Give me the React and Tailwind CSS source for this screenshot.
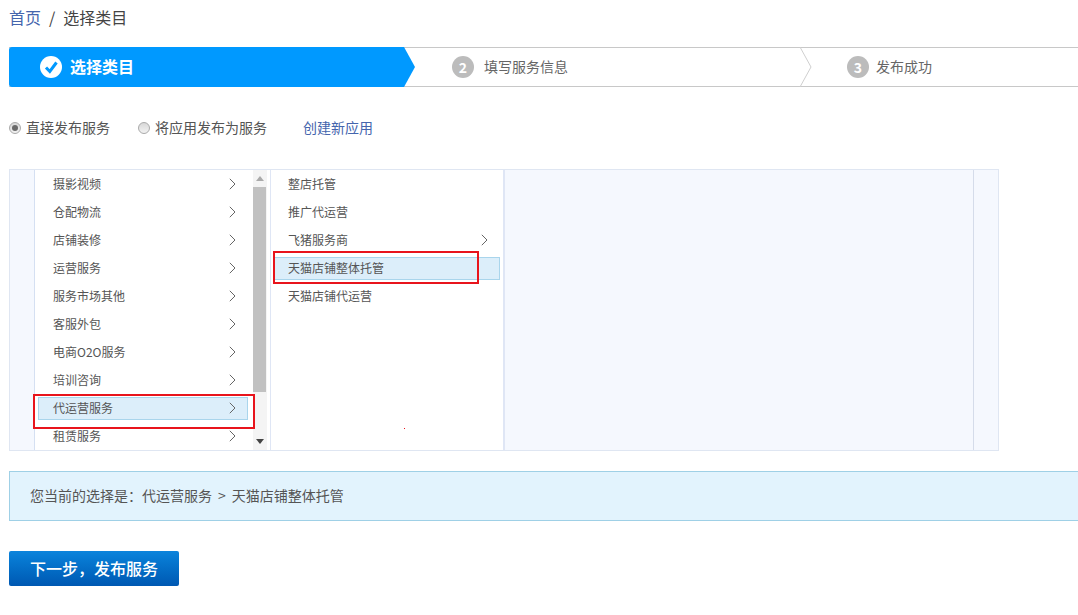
import React from 'react';

const font = { fontFamily: '"Microsoft YaHei", "Noto Sans CJK SC", sans-serif' };

const leftItems = ['摄影视频', '仓配物流', '店铺装修', '运营服务', '服务市场其他', '客服外包', '电商O2O服务', '培训咨询', '代运营服务', '租赁服务'];
const midItems = [
  { name: '整店托管' },
  { name: '推广代运营' },
  { name: '飞猪服务商', more: true },
  { name: '天猫店铺整体托管', active: true },
  { name: '天猫店铺代运营' },
];

const Chevron = () => (
  <svg width="7" height="12" viewBox="0 0 7 12" fill="none" className="mb-px shrink-0">
    <path d="M0.8 0.8 L6 6 L0.8 11.2" stroke="#666" strokeWidth="1" />
  </svg>
);

const Row = ({ name, more, active, rowPad, chevronPad }) => (
  <div className={`h-[28px] py-[3px] ${rowPad}`}>
    <div className={`flex h-[23px] items-center justify-between border pl-[14px] text-xs ${active ? 'border-[#a9d5ec] bg-[#dceefa]' : 'border-transparent'} ${chevronPad} text-[#555]`}>
      <span className="pb-px">{name}</span>
      {more && <Chevron />}
    </div>
  </div>
);

const Step = ({ n, label, gap, className }) => (
  <div className={`flex items-center ${className}`}>
    <span className="flex h-[22px] w-[22px] items-center justify-center rounded-full bg-[#bcbcbc] text-[14px] font-bold text-white">{n}</span>
    <span className={`${gap} pb-[2px] text-[14px] text-[#666]`}>{label}</span>
  </div>
);

const Radio = ({ checked }) => (
  <span className="flex h-[12px] w-[12px] items-center justify-center rounded-full border border-[#aaa] bg-gradient-to-b from-[#d8d8d8] to-[#f2f2f2]">
    {checked && <span className="h-[6px] w-[6px] rounded-full bg-[#6a6a6a]" />}
  </span>
);

export default function App() {
  return (
    <div className="relative h-[615px] w-full overflow-hidden bg-white pl-[9px]" style={font}>
      {/* breadcrumb */}
      <div className="flex h-[37px] items-center pb-[3px] text-[16px] leading-none text-[#444]">
        <span className="text-[#4565ad]">首页</span>
        <span className="mx-[8px]">/</span>
        <span>选择类目</span>
      </div>

      {/* steps */}
      <div className="relative mt-[10px] flex h-[40px] items-center border-y border-[#c8c8c8]">
        <div className="absolute left-0 top-[-1px] h-[40px] w-[406px] rounded-l-[3px] bg-[#0099ff] [clip-path:polygon(0_0,395px_0,406px_50%,395px_100%,0_100%)]" />
        <svg className="absolute left-[790px] top-[-1px]" width="14" height="40" viewBox="0 0 14 40" fill="none">
          <path d="M1 0 L12 20 L1 40" stroke="#cfcfcf" />
        </svg>
        <div className="relative flex w-[443px] items-center pl-[31px]">
          <svg width="22" height="22" viewBox="0 0 22 22">
            <circle cx="11" cy="11" r="11" fill="#fff" />
            <path d="M6 11.5 L9.8 15.5 L16.5 6.5" fill="none" stroke="#0099ff" strokeWidth="3" />
          </svg>
          <span className="ml-[8px] pb-[2px] text-[16px] font-bold text-white">选择类目</span>
        </div>
        <Step n="2" label="填写服务信息" gap="ml-[10px]" className="relative w-[395px]" />
        <Step n="3" label="发布成功" gap="ml-[7px]" className="relative" />
      </div>

      {/* publish type */}
      <div className="mt-[31px] flex h-[20px] items-center text-[14px] text-[#555]">
        <Radio checked />
        <span className="ml-[5px] pb-[2px]">直接发布服务</span>
        <span className="ml-[28px]"><Radio /></span>
        <span className="ml-[5px] pb-[2px]">将应用发布为服务</span>
        <span className="ml-[36px] pb-[2px] text-[#4565ad]">创建新应用</span>
      </div>

      {/* category picker */}
      <div className="mt-[31px] flex h-[282px] w-[990px] border border-[#dfe6f2] bg-[#f5f8fe]">
        <div className="w-[25px] shrink-0 border-r border-[#d5e0f2]" />
        <div className="w-[218px] shrink-0 bg-white">
          {leftItems.map((item) => (
            <Row key={item} name={item} more active={item === '代运营服务'} rowPad="pl-[3px] pr-[5px]" chevronPad="pr-[11px]" />
          ))}
        </div>
        <div className="flex w-[17px] shrink-0 flex-col items-start border-r-[3px] border-white bg-[#f4f4f4]">
          <div className="flex h-[17px] w-[13px] items-center justify-center">
            <span className="h-0 w-0 border-x-[4px] border-b-[5px] border-x-transparent border-b-[#aaa]" />
          </div>
          <div className="h-[205px] w-[13px] bg-[#c1c1c1]" />
          <div className="mt-auto flex h-[17px] w-[13px] items-center justify-center">
            <span className="h-0 w-0 border-x-[4px] border-t-[5px] border-x-transparent border-t-[#444]" />
          </div>
        </div>
        <div className="w-[235px] shrink-0 border-l border-r-2 border-[#dfe6f5] bg-white">
          {midItems.map((item) => (
            <Row key={item.name} {...item} rowPad="pl-[2px] pr-[3px]" chevronPad="pr-[11px]" />
          ))}
        </div>
        <div className="w-[469px] shrink-0 border-r border-[#d5dcea]" />
      </div>

      {/* current selection */}
      <div className="mt-[20px] flex h-[50px] items-center border border-r-0 border-[#9fd0e6] bg-[#e2f3fd] pb-[2px] pl-[20px] text-[14px] text-[#555]">
        您当前的选择是：代运营服务 <span className="mx-[6px]">&gt;</span> 天猫店铺整体托管
      </div>

      <button className="mt-[30px] block h-[35px] w-[170px] rounded-[2px] bg-gradient-to-b from-[#0c84dc] to-[#0058b2] pb-[2px] pl-[21px] text-left text-[16px] font-medium text-white">
        下一步，发布服务
      </button>

      {/* red annotation boxes */}
      <div className="absolute left-[33px] top-[394px] h-[35px] w-[222px] border-2 border-[#e8141c]" />
      <div className="absolute left-[273px] top-[251px] h-[33px] w-[206px] border-2 border-[#e8141c]" />
      <div className="absolute left-[404px] top-[428px] h-px w-px bg-[#e8141c]" />
    </div>
  );
}
